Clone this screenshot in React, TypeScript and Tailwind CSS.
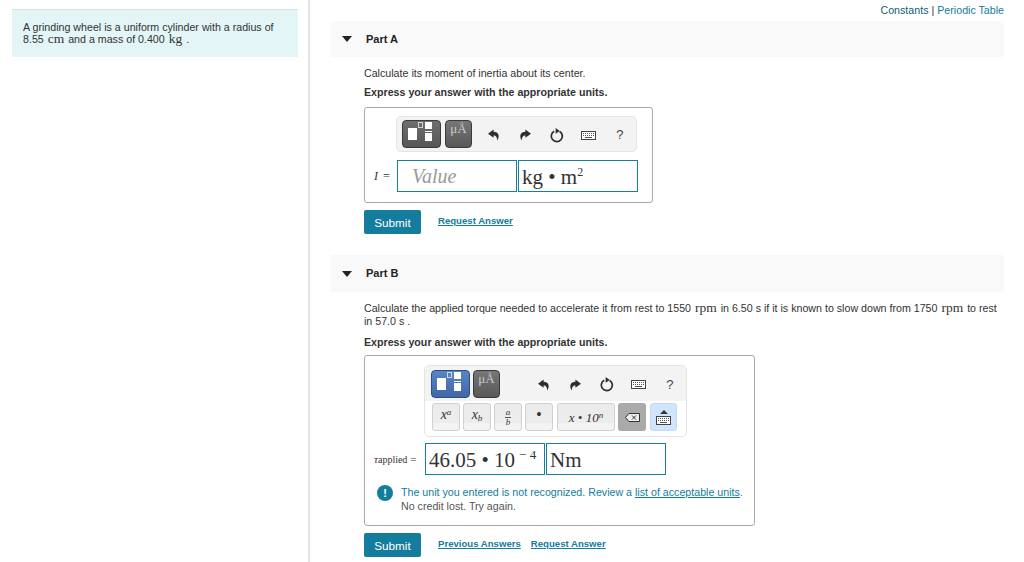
import type { ReactNode } from "react";

const serif = "font-['Liberation_Serif',serif]";
const unit = "mx-[1px] font-['Liberation_Serif',serif] text-[13.5px] leading-[10px]";

function Caret() {
  return (
    <svg width="10" height="6" viewBox="0 0 10 6" className="shrink-0">
      <path d="M0 0h10L5 6z" fill="#222" />
    </svg>
  );
}

function PartHeader({ label, tall }: { label: string; tall?: boolean }) {
  return (
    <div className={`flex items-center gap-[14px] bg-[#f9f9f9] pl-[11px] text-[11px] font-bold text-[#222] ${tall ? "h-[37px]" : "h-[36px]"}`}>
      <Caret />
      <span>{label}</span>
    </div>
  );
}

function Undo({ flip }: { flip?: boolean }) {
  return (
    <svg width="12" height="12" viewBox="0 0 12 12" className={flip ? "-scale-x-100" : ""}>
      <path d="M5.6.4 0 4.8l5.6 4V6.4c2.4 0 3.4 1.4 3.8 5.2 2.6-4.6 1.2-8.8-3.8-8.8z" fill="#2e2e2e" />
    </svg>
  );
}

function Reload() {
  return (
    <svg width="14" height="15" viewBox="0 0 14 15">
      <path d="M9.6 3.4a5.5 5.5 0 1 1-5.4-.1" fill="none" stroke="#2e2e2e" strokeWidth="1.7" />
      <path d="M5.6 0 9.8 3 5.6 5.8z" fill="#2e2e2e" />
    </svg>
  );
}

function Keyboard() {
  return (
    <svg width="15" height="9" viewBox="0 0 15 9">
      <rect x=".5" y=".5" width="14" height="8" fill="#fff" stroke="#444" />
      <path d="M2 2.5h11M2 4.5h11" stroke="#555" strokeDasharray="1 1" />
      <path d="M4 6.5h7" stroke="#555" />
    </svg>
  );
}

function TemplateBtn({ active }: { active?: boolean }) {
  return (
    <div
      className={`relative h-[28px] w-[39px] shrink-0 rounded-[4px] border ${
        active ? "border-[#2c4f86] bg-gradient-to-b from-[#5a84c4] to-[#3f68a8]" : "border-[#3a3a3a] bg-gradient-to-b from-[#6f6f6f] to-[#565656]"
      }`}
    >
      <span className="absolute left-[5px] top-[7px] h-[12px] w-[9px] bg-white" />
      <span className="absolute left-[15px] top-[1px] h-[6px] w-[5px] border border-white/70" />
      <span className="absolute left-[22px] top-[1px] h-[7px] w-[7px] bg-white" />
      <span className="absolute left-[22px] top-[10px] h-[1px] w-[7px] bg-white" />
      <span className="absolute left-[22px] top-[12px] h-[8px] w-[7px] bg-white" />
    </div>
  );
}

function UnitsBtn() {
  return (
    <div className={`h-[28px] w-[27px] shrink-0 rounded-[4px] border border-[#3a3a3a] bg-gradient-to-b from-[#777] to-[#585858] pt-[1px] text-center text-[13px] leading-[14px] text-[#ccc] ${serif}`}>
      μÅ
    </div>
  );
}

function ToolIcons() {
  const cell = "flex h-[16px] w-[31.5px] shrink-0 items-center justify-center";
  return (
    <div className="mt-[2px] flex shrink-0 items-center">
      <span className={cell}><Undo /></span>
      <span className={cell}><Undo flip /></span>
      <span className={cell}><Reload /></span>
      <span className={cell}><Keyboard /></span>
      <span className={`${cell} text-[13px] text-[#444]`}>?</span>
    </div>
  );
}

function MathKey({ children, wide }: { children: ReactNode; wide?: boolean }) {
  return (
    <div
      className={`relative flex h-[28px] items-start justify-center rounded-[3px] border border-[#d0d0d0] bg-[#ececec] pt-[4px] text-[14px] italic leading-[14px] text-[#333] ${serif} ${
        wide ? "ml-[1px] w-[58px]" : "w-[28px]"
      }`}
    >
      <span className="absolute inset-x-0 bottom-0 h-[7px] rounded-b-[3px] bg-[#f3f3f3]" />
      <span className="relative">{children}</span>
    </div>
  );
}

function MathInput({ children }: { children: ReactNode }) {
  return (
    <div className={`flex h-[32px] w-[120px] items-center border border-[#167f9c] bg-white pl-[3px] pt-[3px] text-[21px] text-[#333] ${serif}`}>
      {children}
    </div>
  );
}

function SubmitRow({ links }: { links: string[] }) {
  return (
    <div className="flex items-center">
      <button className="h-[24px] w-[57px] rounded-[2px] bg-[#147c9c] pt-[1px] text-[11.7px] text-white">Submit</button>
      <div className="ml-[17px] flex gap-[10px] pb-[2px] text-[9.6px] font-bold text-[#147c9c] underline">
        {links.map((l) => (
          <span key={l}>{l}</span>
        ))}
      </div>
    </div>
  );
}

export default function App() {
  return (
    <div className="flex h-[562px] w-[1024px] overflow-hidden bg-white font-['Liberation_Sans',Arial,sans-serif] text-[#333]">
      <div className="h-full w-[310px] shrink-0 border-r-2 border-[#dfe6ee] pl-[12px] pr-[10px] pt-[9px]">
        <div className="h-[48px] border-t border-[#d8e4e4] bg-[#e4f5f7] pl-[11px] pr-[16px] pt-[11px] text-[10.66px] leading-[12px]">
          A grinding wheel is a uniform cylinder with a radius of 8.55 <span className={unit}>cm</span> and a mass of 0.400{" "}
          <span className={unit}>kg</span> .
        </div>
      </div>

      <div className="w-[694px] shrink-0 pl-[21px]">
        <div className="flex h-[21px] items-center justify-end pt-[1px] text-[10.66px]">
          <span className="text-[#0f5f75]">Constants</span>
          <span className="mx-[3px] text-[#333]">|</span>
          <span className="text-[#147c9c]">Periodic Table</span>
        </div>

        <PartHeader label="Part A" />
        <div className="pl-[33px]">
          <p className="mt-[10px] text-[10.66px] leading-[12px]">Calculate its moment of inertia about its center.</p>
          <p className="mt-[7px] text-[10.66px] font-bold leading-[12px]">Express your answer with the appropriate units.</p>

          <div className="mt-[9px] h-[96px] w-[289px] rounded-[3px] border border-[#aaa] pl-[8px] pt-[8px]">
            <div className="ml-[23px] flex h-[36px] w-[241px] items-center rounded-[5px] border border-[#e4e4e4] bg-[#f3f3f3] pl-[5px]">
              <TemplateBtn />
              <div className="ml-[4px]"><UnitsBtn /></div>
              <div className="ml-[6px]"><ToolIcons /></div>
            </div>
            <div className="mt-[8px] flex items-center">
              <span className={`flex w-[24px] items-center gap-[5px] pl-[1px] text-[12px] ${serif}`}>
                <i>I</i> <span>=</span>
              </span>
              <MathInput>
                <span className="-mt-[3px] ml-[11px] text-[20px] italic text-[#999]">Value</span>
              </MathInput>
              <span className="ml-[1px]" />
              <MathInput>
                <span>kg • m<sup className="-top-[8px] text-[12px]">2</sup></span>
              </MathInput>
            </div>
          </div>

          <div className="mt-[7px]">
            <SubmitRow links={["Request Answer"]} />
          </div>
        </div>

        <div className="mt-[21px]">
          <PartHeader label="Part B" tall />
        </div>
        <div className="pl-[33px] pr-[4px]">
          <p className="mt-[10px] text-[10.66px] leading-[13px]">
            Calculate the applied torque needed to accelerate it from rest to 1550 <span className={unit}>rpm</span> in 6.50 s if it is known to slow down from 1750{" "}
            <span className={unit}>rpm</span> to rest in 57.0 s .
          </p>
          <p className="mt-[8px] text-[10.66px] font-bold leading-[12px]">Express your answer with the appropriate units.</p>

          <div className="mt-[7px] h-[171px] w-[391px] rounded-[3px] border border-[#aaa] pt-[9px]">
            <div className="ml-[59px] h-[72px] w-[263px] rounded-[5px] border border-[#e4e4e4] pl-[7px]">
              <div className="-ml-[7px] flex h-[35px] items-center rounded-t-[5px] bg-[#f3f3f3] pl-[6px]">
                <TemplateBtn active />
                <div className="ml-[3px]"><UnitsBtn /></div>
                <div className="ml-[28px]"><ToolIcons /></div>
              </div>
              <div className="flex items-center gap-[3px] pt-[2px]">
                <MathKey>x<sup className="text-[9px]">a</sup></MathKey>
                <MathKey>x<sub className="text-[9px]">b</sub></MathKey>
                <MathKey>
                  <span className="flex flex-col items-center text-[9px] leading-[9px]">
                    <span className="border-b border-[#555] px-[1px]">a</span>
                    <span>b</span>
                  </span>
                </MathKey>
                <MathKey>
                  <span className="font-bold not-italic">•</span>
                </MathKey>
                <MathKey wide>
                  <span className="relative top-[3px] whitespace-nowrap text-[13px]">x • 10<sup className="text-[9px]">n</sup></span>
                </MathKey>
                <div className="flex h-[28px] w-[28px] items-center justify-center rounded-[3px] bg-[#aaa]">
                  <svg width="15" height="9" viewBox="0 0 15 9">
                    <path d="M4 .5h10.5v8H4L.5 4.5z" fill="#eee" stroke="#333" />
                    <path d="m7 2.5 4 4m0-4-4 4" stroke="#333" />
                  </svg>
                </div>
                <div className="ml-[1px] flex h-[28px] w-[27px] flex-col items-center justify-center gap-[2px] rounded-[3px] border border-[#c5d9ea] bg-[#cfe5fb]">
                  <svg width="8" height="4" viewBox="0 0 8 4"><path d="M4 0l4 4H0z" fill="#333" /></svg>
                  <Keyboard />
                </div>
              </div>
            </div>

            <div className="mt-[6px] flex items-center">
              <span className={`w-[60px] whitespace-nowrap pl-[9px] text-[11px] ${serif}`}>
                <i>τ</i><span className="text-[10px]">applied</span> =
              </span>
              <MathInput>
                <span>46.05 • 10<sup className="-top-[8px] ml-[4px] text-[13px]">− 4</sup></span>
              </MathInput>
              <span className="ml-[1px]" />
              <MathInput>Nm</MathInput>
            </div>

            <div className="mt-[10px] flex pl-[12px] text-[10.66px] leading-[14px]">
              <span className="flex h-[16px] w-[16px] shrink-0 items-center justify-center rounded-full bg-[#147c9c] text-[11px] font-bold text-white">!</span>
              <div className="ml-[8px] whitespace-nowrap">
                <div className="text-[#147c9c]">
                  The unit you entered is not recognized. Review a <span className="underline">list of acceptable units</span>.
                </div>
                <div className="text-[#555]">No credit lost. Try again.</div>
              </div>
            </div>
          </div>

          <div className="mt-[7px]">
            <SubmitRow links={["Previous Answers", "Request Answer"]} />
          </div>
        </div>
      </div>
    </div>
  );
}
